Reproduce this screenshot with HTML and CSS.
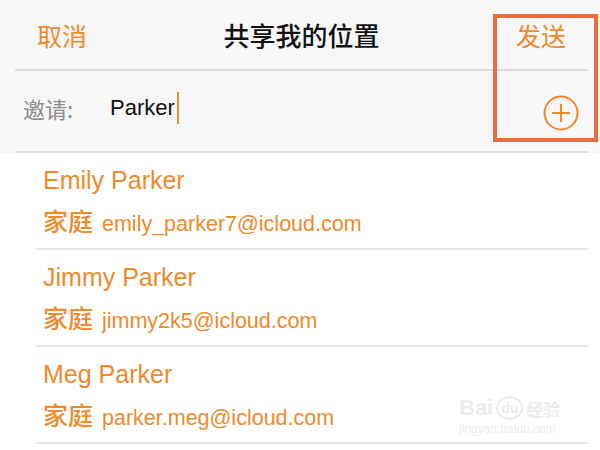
FILE: index.html
```html
<!DOCTYPE html>
<html lang="zh-CN">
<head>
    <meta charset="UTF-8">
    <meta name="viewport" content="width=device-width, initial-scale=1.0">
    <title>共享我的位置</title>
    <link rel="stylesheet" href="styles.css">
</head>
<body>
    <div class="screen">
        <div class="top">
            <div class="navbar">
                <span class="nav-btn">取消</span>
                <span class="nav-title">共享我的位置</span>
                <span class="nav-btn">发送</span>
            </div>
            <div class="invite">
                <span class="invite-label">邀请:</span>
                <span class="invite-value">Parker<span class="caret"></span></span>
                <svg class="add-icon" width="36" height="36" viewBox="0 0 36 36">
                    <circle cx="18" cy="18" r="16.5" fill="none" stroke="#ef8a2b" stroke-width="2"/>
                    <path d="M18 9 V27 M9 18 H27" stroke="#ef8a2b" stroke-width="2" fill="none"/>
                </svg>
            </div>
        </div>

        <ul class="contacts">
            <li class="contact">
                <div class="contact-name">Emily Parker</div>
                <div class="contact-mail"><span class="tag">家庭</span> emily_parker7@icloud.com</div>
            </li>
            <li class="contact">
                <div class="contact-name">Jimmy Parker</div>
                <div class="contact-mail"><span class="tag">家庭</span> jimmy2k5@icloud.com</div>
            </li>
            <li class="contact">
                <div class="contact-name">Meg Parker</div>
                <div class="contact-mail"><span class="tag">家庭</span> parker.meg@icloud.com</div>
            </li>
        </ul>

        <!-- highlight frame drawn over the send button -->
        <div class="highlight"></div>

        <div class="watermark">
            <div class="wm-logo">Bai<span class="wm-du">du</span><span class="wm-cn">经验</span></div>
            <div class="wm-url">jingyan.baidu.com</div>
        </div>
    </div>
</body>
</html>
```

FILE: styles.css
```css
body {
    margin: 0;
    background: #fff;
    font-family: "Liberation Sans", "Noto Sans CJK SC", Arial, sans-serif;
}
.screen {
    width: 600px;
    height: 450px;
    position: relative;
    overflow: hidden;
}
.top {
    background-color: #f7f7f7;
}
.navbar {
    height: 69px;
    margin: 0 12px 0 15px;
    padding: 0 22px;
    display: flex;
    align-items: center;
    justify-content: space-between;
    border-bottom: 2px solid #dcdcdc;
}
.nav-btn {
    color: #ef8a2b;
    font-size: 25px;
    font-family: "Noto Sans CJK SC", sans-serif;
}
.nav-title {
    color: #111;
    font-size: 26px;
    font-weight: 500;
    font-family: "Noto Sans CJK SC", sans-serif;
}
.invite {
    height: 80px;
    margin: 0 12px 0 15px;
    padding: 0 8px;
    display: flex;
    align-items: center;
    border-bottom: 2px solid #e0e0e0;
}
.invite-label {
    width: 87px;
    color: #8c8c8c;
    font-size: 22px;
    font-family: "Noto Sans CJK SC", sans-serif;
    margin-top: -6px;
}
.invite-value {
    color: #111;
    font-size: 22px;
    margin-top: -6px;
    display: flex;
    align-items: center;
}
.caret {
    display: inline-block;
    width: 2px;
    height: 32px;
    margin-left: 2px;
    background-color: #ef8a2b;
}
.add-icon {
    margin-left: auto;
    margin-top: 4px;
    margin-right: 1px;
}
.contacts {
    list-style: none;
    margin: 0 12px 0 36px;
    padding: 0;
}
.contact {
    height: 95px;
    padding-left: 7px;
    border-bottom: 2px solid #e6e6e6;
    color: #ef8a2b;
    display: flex;
    flex-direction: column;
}
.contact-name {
    margin-top: 12px;
    font-size: 25px;
    line-height: 30px;
}
.contact-mail {
    margin-top: 12px;
    font-size: 21.5px;
    line-height: 34px;
    height: 34px;
}
.tag {
    font-family: "Noto Sans CJK SC", sans-serif;
    font-size: 25px;
    font-weight: 500;
    line-height: 1;
    margin-right: 3px;
}
.highlight {
    position: absolute;
    left: 493px;
    top: 14px;
    width: 105px;
    height: 128px;
    box-sizing: border-box;
    border: 4px solid #ea6d3f;
}
.watermark {
    position: absolute;
    left: 459px;
    top: 396px;
    color: #ececec;
    line-height: 1;
}
.wm-logo {
    font-size: 22px;
    font-weight: bold;
    display: flex;
    align-items: center;
}
.wm-du {
    font-size: 14px;
    border: 2px solid #ececec;
    border-radius: 50%;
    padding: 3px 3px;
    margin: 0 3px;
}
.wm-cn {
    font-family: "Noto Sans CJK SC", sans-serif;
    font-size: 17px;
}
.wm-url {
    margin-top: 3px;
    font-size: 12px;
}
```
